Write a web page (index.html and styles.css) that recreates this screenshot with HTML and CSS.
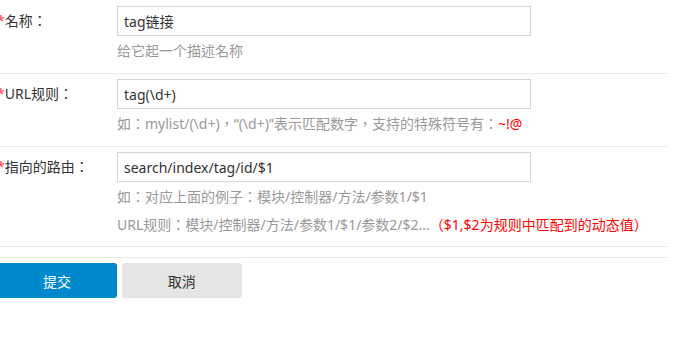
FILE: index.html
```html
<!DOCTYPE html>
<html>
<head>
<meta charset="utf-8">
<meta name="viewport" content="width=device-width, initial-scale=1">
<title>URL规则</title>
<link rel="stylesheet" href="styles.css">
</head>
<body>

<form class="ruleForm">
  <div class="formRow">
    <label class="rowLabel"><span class="req">*</span>名称：</label>
    <div class="rowField">
      <input class="textInput" type="text" value="tag链接">
      <p class="help">给它起一个描述名称</p>
    </div>
  </div>

  <div class="formRow">
    <label class="rowLabel"><span class="req">*</span>URL规则：</label>
    <div class="rowField">
      <input class="textInput" type="text" value="tag(\d+)">
      <p class="help">如：mylist/(\d+)，“(\d+)”表示匹配数字，支持的特殊符号有：<span class="red">~!@</span></p>
    </div>
  </div>

  <div class="formRow lastRow">
    <label class="rowLabel"><span class="req">*</span>指向的路由：</label>
    <div class="rowField">
      <input class="textInput" type="text" value="search/index/tag/id/$1">
      <p class="help">如：对应上面的例子：模块/控制器/方法/参数1/$1</p>
      <p class="help">URL规则：模块/控制器/方法/参数1/$1/参数2/$2...<span class="red">（$1,$2为规则中匹配到的动态值）</span></p>
    </div>
  </div>

  <div class="formActions">
    <button class="btn btnPrimary" type="button">提交</button>
    <button class="btn btnDefault" type="button">取消</button>
  </div>
</form>

</body>
</html>
```

FILE: styles.css
```css
body {
    margin: 0;
    background-color: white;
    font-family: "Noto Sans", "Noto Sans CJK TC", sans-serif;
    font-size: 14px;
    color: #333;
}

.ruleForm {
    margin-left: -3px;
    width: 670px;
}

.formRow {
    display: flex;
    padding: 6px 0 8px 0;
    border-bottom: 1px solid #e8e8e8;
}

.formRow + .formRow {
    padding-top: 5px;
}

.lastRow {
    padding-bottom: 7px;
}

.rowLabel {
    width: 120px;
    flex-shrink: 0;
    height: 30px;
    line-height: 30px;
}

.req {
    color: #f44;
}

.rowField {
    flex: 1;
}

.textInput {
    display: block;
    box-sizing: border-box;
    width: 414px;
    height: 30px;
    margin: 0;
    padding: 0 6px;
    border: 1px solid #d5d5d5;
    font-family: inherit;
    font-size: 14px;
    color: #333;
    outline: none;
}

.help {
    margin: 0;
    padding-top: 1px;
    line-height: 28px;
    color: #999;
}

.help + .help {
    padding-top: 0;
}

.red {
    color: #f00;
}

.formActions {
    margin-top: 10px;
    padding-top: 5px;
    border-top: 1px solid #e8e8e8;
}

.btn {
    width: 120px;
    height: 35px;
    border: none;
    border-radius: 3px;
    font-family: inherit;
    font-size: 14px;
    vertical-align: top;
}

.btnPrimary {
    background-color: #0088cc;
    color: white;
}

.btnDefault {
    margin-left: 1px;
    background-color: #e5e5e5;
    color: #333;
}
```
